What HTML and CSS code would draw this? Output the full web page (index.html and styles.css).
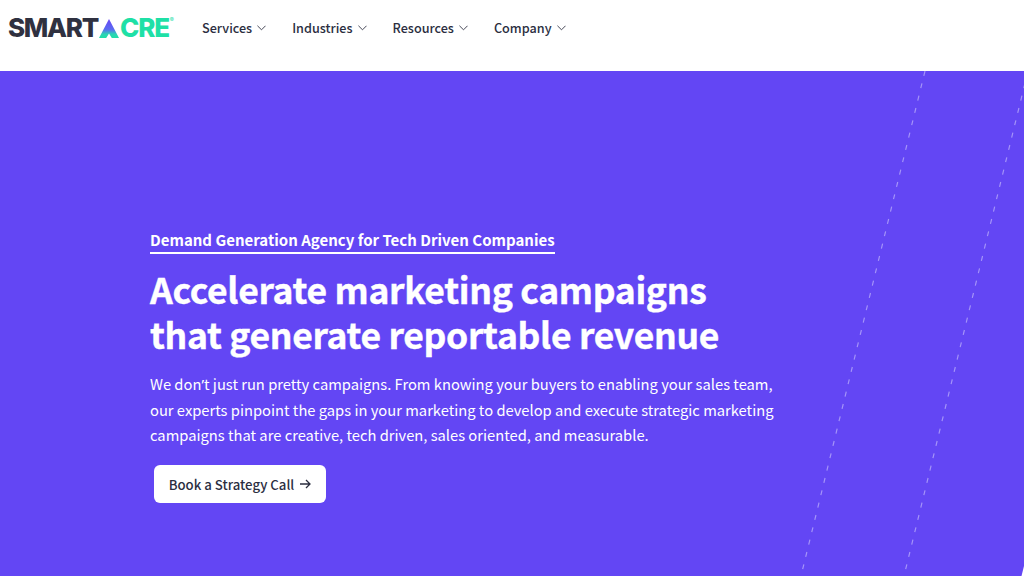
FILE: index.html
```html
<!DOCTYPE html>
<html lang="en">
<head>
<meta charset="utf-8">
<title>SmartAcre</title>
<link rel="stylesheet" href="styles.css">
</head>
<body>
<svg class="defs" aria-hidden="true">
  <defs>
    <linearGradient id="markFill" x1="0" y1="0" x2="0" y2="1">
      <stop offset="0" stop-color="#6a45f6"/>
      <stop offset=".55" stop-color="#5a6bf0"/>
      <stop offset=".8" stop-color="#2bd4b4"/>
      <stop offset="1" stop-color="#1ee0a6"/>
    </linearGradient>
  </defs>
</svg>
<header class="header">
  <a class="logo" href="#">
    <span class="logo-dark">SMART</span>
    <svg class="logo-mark" viewBox="0 0 20 19" aria-hidden="true">
      <path fill="url(#markFill)" d="M10 0 20 19H12.800L10 14.500 7.200 19H0Z"/>
    </svg>
    <span class="logo-green">CRE</span>
    <span class="logo-reg">®</span>
  </a>
  <nav class="nav">
    <a class="nav-item" href="#">Services <svg class="chev" viewBox="0 0 10 6"><path d="M.5.5 5 5 9.500.5"/></svg></a>
    <a class="nav-item" href="#">Industries <svg class="chev" viewBox="0 0 10 6"><path d="M.5.5 5 5 9.500.5"/></svg></a>
    <a class="nav-item" href="#">Resources <svg class="chev" viewBox="0 0 10 6"><path d="M.5.5 5 5 9.500.5"/></svg></a>
    <a class="nav-item" href="#">Company <svg class="chev" viewBox="0 0 10 6"><path d="M.5.5 5 5 9.500.5"/></svg></a>
  </nav>
</header>
<main class="hero">
  <svg class="lines" viewBox="0 0 1024 505" aria-hidden="true">
    <line x1="925" y1="0" x2="801" y2="505"/>
    <line x1="1028" y1="0" x2="904" y2="505"/>
    <polygon class="corner" points="1024,495 1021.500,505 1024,505"/>
  </svg>
  <p class="eyebrow">Demand Generation Agency for Tech Driven Companies</p>
  <h1 class="title">Accelerate marketing campaigns<br>that generate reportable revenue</h1>
  <p class="lead">We don<span class="apos">’</span>t just run pretty campaigns. From knowing your buyers to enabling your sales team,<br>our experts pinpoint the gaps in your marketing to develop and execute strategic marketing<br>campaigns that are creative, tech driven, sales oriented, and measurable.</p>
  <a class="cta" href="#">Book a Strategy Call <svg class="arrow" viewBox="1 0 11 10"><path d="M1 5H11M7 1l4 4-4 4"/></svg></a>
</main>
</body>
</html>
```
FILE: styles.css
```css
* { box-sizing: border-box; }
html, body { margin: 0; height: 100%; overflow: hidden; }
body {
  font-family: "Noto Sans CJK SC", "Noto Sans", sans-serif;
  background: #fff;
  color: #2b2e3f;
}
a { color: inherit; text-decoration: none; }
.defs { position: absolute; width: 0; height: 0; }
.header {
  height: 71px;
  display: flex;
  align-items: center;
  padding: 0 0 15px 8px;
  background: #fff;
}
.logo {
  display: flex;
  align-items: center;
  width: 194px;
  font-family: Inter, sans-serif;
  font-weight: 800;
  font-size: 26px;
  line-height: 1;
}
.logo-dark { color: #2f3140; letter-spacing: -1.300px; }
.logo-green { color: #1ee0a6; letter-spacing: -1.200px; }
.logo-reg { color: #1ee0a6; font-size: 6px; align-self: flex-start; margin: 2px 0 0 1px; font-weight: 400; }
.logo-mark { width: 20px; height: 19px; flex: none; margin: 1px 1px 0 1px; }
.nav { display: flex; gap: 26px; }
.nav-item {
  display: flex;
  align-items: center;
  gap: 5px;
  font-size: 12.640px;
  font-weight: 500;
  line-height: 20px;
}
.chev { width: 9px; height: 6px; fill: none; stroke: #444655; stroke-width: 1.100; }
.hero {
  position: relative;
  height: 505px;
  background: #6346f4;
  color: #fff;
  padding: 158px 0 0 150px;
  display: flex;
  flex-direction: column;
  align-items: flex-start;
  overflow: hidden;
}
.lines { position: absolute; inset: 0; width: 1024px; height: 505px; }
.lines line { stroke: rgba(255,255,255,.42); stroke-width: 1.200; stroke-dasharray: 5 7.700; }
.corner { fill: #fff; }
.eyebrow {
  position: relative;
  margin: 0;
  font-size: 15px;
  font-weight: 700;
  line-height: 22px;
  padding-bottom: 1px;
  border-bottom: 2px solid #fff;
}
.title {
  position: relative;
  margin: 12px 0 0;
  font-size: 35.500px;
  font-weight: 700;
  line-height: 45px;
  letter-spacing: -.33px;
  -webkit-text-stroke: .4px #fff;
}
.lead {
  position: relative;
  margin: 15.400px 0 0;
  font-size: 14.720px;
  font-weight: 400;
  line-height: 25px;
}
.apos { font-family: "Noto Sans", sans-serif; }
.cta {
  position: relative;
  margin: 18px 0 0 4px;
  width: 172px;
  height: 38px;
  display: flex;
  align-items: center;
  justify-content: center;
  gap: 6px;
  background: #fff;
  color: #2b2e3f;
  border-radius: 6px;
  font-size: 13.200px;
  font-weight: 500;
}
.arrow { width: 11px; height: 10px; fill: none; stroke: #2b2e3f; stroke-width: 1.300; }
```
